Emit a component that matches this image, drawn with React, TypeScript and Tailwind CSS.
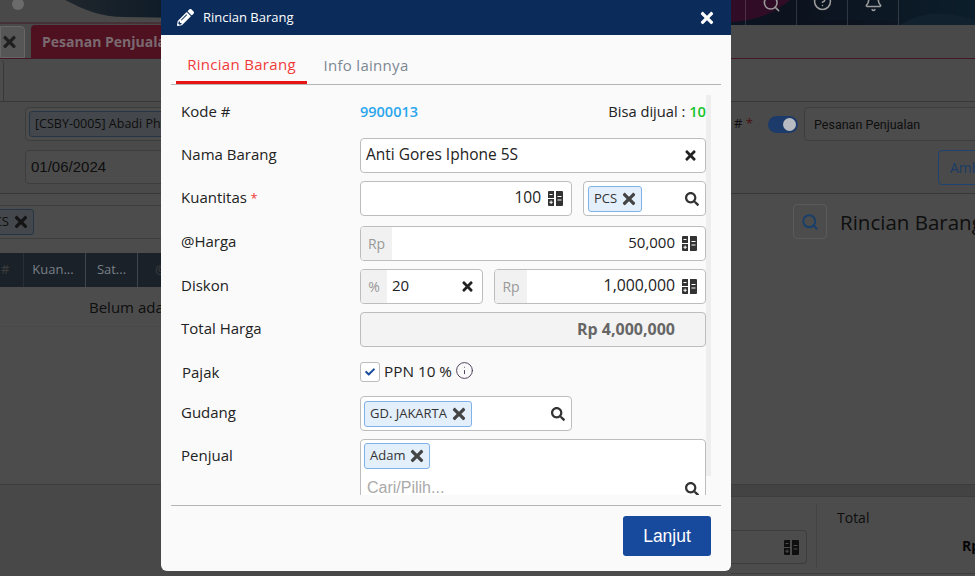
import React from "react";
import { FaTimes, FaSearch, FaPencilAlt, FaCheck } from "react-icons/fa";
import { Info, Search, CircleHelp, Bell } from "lucide-react";

const sans = "font-['Open_Sans','Noto_Sans',sans-serif]";

function Calc({ className = "text-[#333]" }: { className?: string }) {
  return (
    <svg viewBox="0 0 15 15" className={`w-[15px] h-[15px] shrink-0 ${className}`} fill="currentColor">
      <path fillRule="evenodd" d="M0 1a1 1 0 0 1 1-1h5v7H0zM1.500 3v1h3V3zM0 8h6v7H1a1 1 0 0 1-1-1zM2.600 9.600v1.200H1.400v1h1.200V13h1v-1.200h1.200v-1H3.600V9.600z" />
      <path fillRule="evenodd" d="M8 0h6a1 1 0 0 1 1 1v13a1 1 0 0 1-1 1H8zM9.500 5v1h4V5zm0 3.500v1h4v-1z" />
    </svg>
  );
}

function Tag({ label }: { label: string }) {
  return (
    <span className="flex items-center h-[26px] pl-[5px] pr-[3px] gap-[3px] border border-[#7fb2ea] bg-[#e4effc] rounded-[3px] text-[13px] text-[#333] shrink-0 whitespace-nowrap">
      {label}
      <FaTimes className="text-[#444] text-[18px]" />
    </span>
  );
}

function Row({ label, className = "", labelClass = "pb-[2px]", children }: { label: React.ReactNode; className?: string; labelClass?: string; children: React.ReactNode }) {
  return (
    <div className={`flex items-center ${className}`}>
      <div className={`w-[179px] shrink-0 text-[15px] text-[#222] ${labelClass}`}>{label}</div>
      <div className="w-[346px] shrink-0">{children}</div>
    </div>
  );
}

const box = "flex items-center h-[35px] border border-[#bdbdbd] rounded-[4px] overflow-hidden";

function Addon({ children, w }: { children: React.ReactNode; w: string }) {
  return <span className={`flex items-center justify-center h-full bg-[#f1f1f1] text-[#999] text-[14px] shrink-0 ${w}`}>{children}</span>;
}

function Modal() {
  return (
    <div className={`absolute z-30 left-[161px] top-0 w-[570px] h-[571px] bg-[#fafafa] rounded-b-[6px] flex flex-col ${sans}`}>
      <div className="h-[35px] shrink-0 bg-[#0b2c5a] flex items-center justify-between pl-[16px] pr-[15px] text-white">
        <div className="flex items-center gap-[9px]">
          <FaPencilAlt className="text-[17px]" />
          <span className="text-[13px]">Rincian Barang</span>
        </div>
        <FaTimes className="text-[18px]" />
      </div>
      <div className="mx-[10px] mt-[11px] h-[39px] shrink-0 flex border-b border-[#b5b5b5] pl-[5px] gap-[5px] text-[15px] tracking-[0.3px]">
        <div className="w-[131px] h-[38px] pt-[1px] flex items-center justify-center text-[#f03a3a] border-b-[3px] border-[#e81313]">Rincian Barang</div>
        <div className="w-[108px] h-[38px] flex items-center justify-center text-[#7d8794]">Info lainnya</div>
      </div>
      <div className="relative h-[405px] mt-[5px] shrink-0 overflow-hidden pl-[20px] pt-[4px]">
        <div className="absolute left-[545px] top-[5px] w-[5px] h-[381px] bg-[#eeeeee]" />
        <Row label="Kode #" labelClass="" className="h-[35px]">
          <div className="flex justify-between items-center">
            <span className="text-[#2ba6ee] font-semibold text-[14.5px]">9900013</span>
            <span className="text-[#222] text-[14.7px]">Bisa dijual : <span className="text-[#19c42c] font-semibold">10</span></span>
          </div>
        </Row>
        <Row label="Nama Barang" className="mt-[9px]">
          <div className={`${box} bg-white pl-[5px] pr-[7px] justify-between text-[#222]`}>
            <span className="text-[15.5px] pb-[2px]">Anti Gores Iphone 5S</span>
            <FaTimes className="text-[15px] text-[#222]" />
          </div>
        </Row>
        <Row label={<>Kuantitas <span className="text-[#e33] text-[12px]">*</span></>} className="mt-[8px]">
          <div className="flex gap-[11px]">
            <div className={`${box} bg-white w-[212px] justify-end pr-[8px] gap-[7px] text-[15.5px] text-[#222]`}><span className="pb-[2px]">100</span><Calc /></div>
            <div className={`${box} bg-white w-[123px] pl-[4px] pr-[6px] justify-between`}>
              <Tag label="PCS" />
              <FaSearch className="text-[14px] text-[#333]" />
            </div>
          </div>
        </Row>
        <Row label="@Harga" labelClass="pb-[4px]" className="mt-[10px]">
          <div className={`${box} bg-white text-[15px] text-[#222] pr-[8px]`}>
            <Addon w="w-[31px]">Rp</Addon>
            <span className="ml-auto mr-[7px] pb-[3px]">50,000</span>
            <Calc />
          </div>
        </Row>
        <Row label="Diskon" className="mt-[8px]">
          <div className="flex gap-[11px]">
            <div className={`${box} bg-white w-[123px] text-[15px] text-[#222] pr-[7px]`}>
              <Addon w="w-[26px]">%</Addon>
              <span className="ml-[5px] pb-[2px]">20</span>
              <FaTimes className="ml-auto text-[15px] text-[#222]" />
            </div>
            <div className={`${box} bg-white w-[212px] text-[#222] pr-[8px]`}>
              <Addon w="w-[32px]">Rp</Addon>
              <span className="ml-auto mr-[7px] pb-[2px] text-[15.8px]">1,000,000</span>
              <Calc />
            </div>
          </div>
        </Row>
        <Row label="Total Harga" className="mt-[8px]">
          <div className={`${box} bg-[#f3f3f3] justify-end pr-[30px] pb-[2px] text-[16px] font-bold text-[#666]`}>Rp 4,000,000</div>
        </Row>
        <Row label={<span className="ml-[1px]">Pajak</span>} labelClass="" className="mt-[13px] h-[24px]">
          <div className="flex items-center text-[#222]">
            <span className="flex items-center justify-center w-[20px] h-[20px] border border-[#bdbdbd] rounded-[3px] bg-white">
              <FaCheck className="text-[10px] text-[#174a9c]" />
            </span>
            <span className="ml-[4px] text-[15.3px] pb-[2px]">PPN 10 %</span>
            <Info size={19} strokeWidth={1.1} className="ml-[3px] -mt-[3px] text-[#3a2a4a]" />
          </div>
        </Row>
        <Row label="Gudang" className="mt-[12px]">
          <div className={`${box} bg-white w-[212px] pl-[3px] pr-[6px] justify-between`}>
            <Tag label="GD. JAKARTA" />
            <FaSearch className="text-[14px] text-[#333]" />
          </div>
        </Row>
        <div className="flex mt-[8px] h-[70px]">
          <div className="w-[179px] shrink-0 text-[15px] text-[#222] pt-[5px]">Penjual</div>
          <div className="relative w-[346px] h-[70px] border border-[#bdbdbd] rounded-[4px] bg-white pl-[3px] pt-[3px]">
            <div className="flex"><Tag label="Adam" /></div>
            <div className="mt-[7px] ml-[3px] text-[16px] text-[#aaa] font-['Liberation_Sans',sans-serif]">Cari/Pilih...</div>
            <FaSearch className="absolute right-[6px] top-[42px] text-[14px] text-[#333]" />
          </div>
        </div>
      </div>
      <div className="mx-[10px] mt-[10px] border-t border-[#b5b5b5] pt-[10px] flex justify-end pr-[10px]">
        <button className="w-[88px] h-[40px] rounded-[3px] bg-[#174a9c] text-white text-[17.5px] font-['Liberation_Sans',sans-serif]">Lanjut</button>
      </div>
    </div>
  );
}

function Header() {
  return (
    <div className="relative h-[25px] bg-[#f4f4f4]">
      <svg className="absolute inset-0 w-full h-full" viewBox="0 0 975 25" preserveAspectRatio="none">
        <defs>
          <linearGradient id="g" x1="0" x2="1" y1="0" y2="0">
            <stop offset="0" stopColor="#6a7f95" />
            <stop offset="0.16" stopColor="#1b4f80" />
            <stop offset="0.8" stopColor="#2a3f66" />
            <stop offset="1" stopColor="#2a6590" />
          </linearGradient>
        </defs>
        <rect x="0" y="22.500" width="975" height="1" fill="#e0527a" />
        <path d="M65 0 C85 10 100 17 125 17 L300 20 L975 25 L975 0Z" fill="url(#g)" />
        <path d="M300 20 L975 20 L975 25 L300 25Z" fill="url(#g)" />
        <path d="M731 0 L790 0 C775 12 760 20 731 22Z" fill="#a02a80" />
        <path d="M900 25 C925 10 945 12 975 20 L975 25Z" fill="#3c6f9a" />
      </svg>
      <span className="absolute z-20 left-[12px] -top-[2px] w-[12px] h-[12px] rounded-full bg-[#6b6b6b]" />
      <div className="absolute left-[745px] top-0 flex h-full overflow-hidden text-[#9a9a9a]">
        <div className="relative z-20 w-[51px] h-full border-l border-[#ffffff]/15 flex justify-center"><Search size={19} strokeWidth={2} className="-mt-[6px]" /></div>
        <div className="relative z-20 w-[51px] h-full border-l border-[#ffffff]/15 flex justify-center"><CircleHelp size={19} strokeWidth={2} className="-mt-[8px]" /></div>
        <div className="relative z-20 w-[51px] h-full border-l border-[#ffffff]/15 flex justify-center"><Bell size={19} strokeWidth={2} className="-mt-[7px]" /></div>
        <div className="relative z-20 w-[77px] h-full border-l border-[#ffffff]/15 pl-[55px] text-[14px]"><span className="block -mt-[16px]">Re</span></div>
      </div>
    </div>
  );
}

function Page() {
  return (
    <div className={`w-[975px] h-[576px] overflow-hidden flex flex-col bg-white text-[#333] ${sans}`}>
      <Header />
      <div className="h-[34px] shrink-0 bg-[#f4f4f4] border-b border-[#e0527a] flex items-end pl-0 gap-[6px]">
        <div className="relative z-20 w-[25px] h-[32px] bg-[#565656] border border-[#666] rounded-tr-[4px] flex items-center justify-center pr-[6px] text-[#1f1f1f]"><FaTimes className="text-[18px]" /></div>
        <div className="relative z-20 w-[160px] h-[33px] bg-[#4f1020] rounded-t-[4px] flex items-center pl-[11px] text-[14px] font-bold text-[#7a6a70] whitespace-nowrap">Pesanan Penjualan</div>
      </div>
      <div className="h-[43px] shrink-0 bg-[#fbfbfb] border-b border-[#bbb]">
        <div className="w-[4px] h-[41px] mt-[1px] border-r border-[#bbb] bg-white rounded-tr-[4px]" />
      </div>
      <div className="h-[92px] shrink-0 border-b border-[#bbb] bg-[#f8f8f8] flex justify-between">
        <div className="pl-[25px] pt-[5px] w-[400px]">
          <div className="h-[34px] border border-[#ccc] rounded-[4px] bg-white flex items-center pl-[3px]">
            <span className="h-[26px] px-[5px] flex items-center border border-[#7fb2ea] bg-[#e4effc] rounded-[3px] text-[12.5px] text-[#333] whitespace-nowrap">[CSBY-0005] Abadi Phone</span>
          </div>
          <div className="mt-[9px] h-[34px] border border-[#ccc] rounded-[4px] bg-white flex items-center pl-[5px] text-[15px] font-['Liberation_Sans',sans-serif]">01/06/2024</div>
        </div>
        <div className="w-[244px] pt-[5px] overflow-hidden">
          <div className="flex items-center h-[34px] whitespace-nowrap">
            <span className="text-[13px] text-[#333] ml-[3px] w-[34px] shrink-0"># <span className="text-[#e33]">*</span></span>
            <span className="relative z-20 w-[30px] h-[17px] rounded-full bg-[#1c3a6a] shrink-0"><span className="absolute right-[2px] top-[2px] w-[13px] h-[13px] rounded-full bg-[#b8bcc2]" /></span>
            <div className="ml-[6px] w-[180px] shrink-0 h-[34px] border border-[#ccc] rounded-[4px] bg-white flex items-center pl-[9px] pt-[3px] text-[12.5px] font-['Roboto',sans-serif]">Pesanan Penjualan</div>
          </div>
          <div className="relative z-20 mt-[9px] ml-[207px] w-[60px] h-[35px] border border-[#1e4272] rounded-[4px] flex items-center pl-[11px] text-[14px] text-[#1a3c66]">Ambil</div>
        </div>
      </div>
      <div className="h-[290px] shrink-0 flex justify-between">
        <div className="w-[400px]">
          <div className="mt-[11px] h-[34px] border-y border-[#ccc] flex items-center">
            <div className="w-[34px] flex justify-end">
              <span className="h-[26px] pl-[5px] pr-[3px] gap-[3px] flex items-center border border-[#7fb2ea] bg-[#e4effc] rounded-[3px] text-[13px] text-[#333] whitespace-nowrap shrink-0">PCS<FaTimes className="text-[18px] text-[#444]" /></span>
            </div>
          </div>
          <div className="mt-[14px] h-[34px] bg-[#5a7088] flex text-[13px] text-[#c8c8c8]">
            <div className="w-[24px] border-r border-[#8a9aaa] pl-[1px] flex items-center">#</div>
            <div className="relative z-20 w-[62px] border-r border-[#3d4650] flex items-center justify-center pr-[3px] text-[#788088]">Kuan...</div>
            <div className="relative z-20 w-[52px] border-r border-[#3d4650] flex items-center justify-center text-[#788088]">Sat...</div>
            <div className="pl-[17px] flex items-center">@</div>
          </div>
          <div className="h-[40px] border-b border-[#eee] pl-[89px] pt-[2px] flex items-center text-[15px] text-[#333]">Belum ada data</div>
        </div>
        <div className="w-[182px] overflow-hidden pt-[10px] flex items-start whitespace-nowrap">
          <span className="relative z-20 w-[34px] h-[35px] border border-[#5a5a5a] rounded-[4px] flex items-center justify-center shrink-0 text-[#163f6b]"><Search size={18} strokeWidth={2.5} /></span>
          <span className="ml-[13px] text-[20.5px] text-[#333] mt-[3px]">Rincian Barang</span>
        </div>
      </div>
      <div className="flex-1 flex justify-between">
        <div className="w-[400px] bg-[#f0f0f0] border-t border-[#ccc]" />
        <div className="w-[244px] h-[90px] border-y border-[#ccc] overflow-hidden">
          <div className="h-[12px] bg-[#e2e2e2] border-b border-[#ccc]" />
          <div className="flex pt-[7px]">
            <div className="w-[86px] shrink-0 h-[64px] border-r border-[#ddd] pt-[26px] pr-[9px]">
              <div className="h-[34px] border border-[#ccc] border-l-0 rounded-r-[4px] flex items-center justify-end pr-[7px]"><Calc /></div>
            </div>
            <div className="pl-[20px] pt-[3px] text-[14px] text-[#333] shrink-0">
              <div>Total</div>
              <div className="mt-[7px] pl-[125px] font-bold text-[#111] whitespace-nowrap">Rp</div>
            </div>
          </div>
        </div>
      </div>
    </div>
  );
}

export default function App() {
  return (
    <div className="relative w-[975px] h-[576px] overflow-hidden">
      <Page />
      <div className="absolute inset-0 z-10 bg-black/70" />
      <Modal />
    </div>
  );
}
